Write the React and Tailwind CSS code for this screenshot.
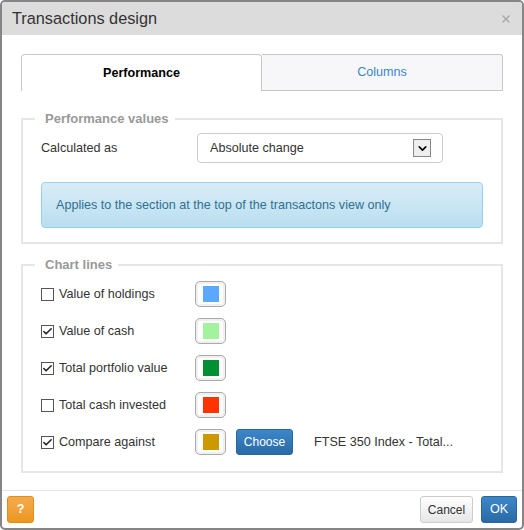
import { X, Check, ChevronDown } from 'lucide-react';

const rows = [
  { label: 'Value of holdings', checked: false, color: '#5ba8ff' },
  { label: 'Value of cash', checked: true, color: '#a3f29f' },
  { label: 'Total portfolio value', checked: true, color: '#008f33' },
  { label: 'Total cash invested', checked: false, color: '#ff3300' },
  { label: 'Compare against', checked: true, color: '#cc9900', compare: true },
];

function Box({ checked }) {
  return (
    <span className="flex h-[13px] w-[13px] items-center justify-center border border-[#555] bg-white">
      {checked && <Check className="h-[11px] w-[11px] text-[#222]" strokeWidth={3.5} />}
    </span>
  );
}

function Swatch({ color }) {
  return (
    <span className="flex h-[26px] w-[31px] items-center justify-center rounded-[5px] border border-[#aaa] bg-white shadow-[inset_0_0_0_2px_#f0f0f0]">
      <span className="h-[16px] w-[16px]" style={{ backgroundColor: color }} />
    </span>
  );
}

export default function App() {
  return (
    <div className="h-[530px] w-[524px] bg-white font-['Liberation_Sans',Arial,sans-serif] text-[12.6px] text-[#333]">
      <div className="flex h-full flex-col overflow-hidden rounded-[5px] border-2 border-[#858585] bg-white">
        <div className="flex h-[33px] items-center justify-between bg-[#dcdcdc] pl-[10px] pr-[10px]">
          <span className="text-[16.3px] text-[#333]">Transactions design</span>
          <X className="h-[12px] w-[12px] text-[#aaa]" strokeWidth={3} />
        </div>

        <div className="flex-1 px-[19px] pt-[19px]">
          <div className="flex h-[37px]">
            <div className="flex w-[241px] items-center justify-center rounded-t-[4px] border border-b-0 border-[#c8c8c8] bg-white font-bold text-black">
              Performance
            </div>
            <div className="flex flex-1 items-center justify-center rounded-tr-[3px] border border-l-0 border-[#c8c8c8] bg-[#f7f7f9] text-[#3a87c8]">
              Columns
            </div>
          </div>

          <fieldset className="mt-[18px] border-2 border-[#e6e6e6] px-[18px] pb-[14px]">
            <legend className="ml-[-6px] pl-[10px] pr-[6px] text-[13px] leading-[20px] font-bold text-[#999]">Performance values</legend>
            <div className="mt-[4px] flex h-[30px] items-center">
              <span className="w-[156px]">Calculated as</span>
              <div className="flex h-[30px] w-[246px] items-center justify-between rounded-[4px] border border-[#ccc] pl-[12px] pr-[11px]">
                <span className="text-[#333]">Absolute change</span>
                <span className="flex h-[18px] w-[18px] items-center justify-center border border-[#888] bg-[#eee]">
                  <ChevronDown className="h-[13px] w-[13px] text-black" strokeWidth={3} />
                </span>
              </div>
            </div>
            <div className="mt-[19px] flex h-[46px] items-center rounded-[4px] border border-[#9acfea] bg-gradient-to-b from-[#d9edf7] to-[#b9def0] pl-[14px] text-[#31708f]">
              Applies to the section at the top of the transactons view only
            </div>
          </fieldset>

          <fieldset className="mt-[11px] border-2 border-[#e6e6e6] px-[18px] pb-[16px]">
            <legend className="ml-[-6px] pl-[10px] pr-[6px] text-[13px] leading-[20px] font-bold text-[#999]">Chart lines</legend>
            <div className="flex flex-col gap-[11px] pt-[6px]">
              {rows.map((r) => (
                <div key={r.label} className="flex h-[26px] items-center">
                  <Box checked={r.checked} />
                  <span className="ml-[5px] w-[136px]">{r.label}</span>
                  <Swatch color={r.color} />
                  {r.compare && (
                    <>
                      <span className="ml-[10px] flex h-[26px] w-[57px] items-center justify-center rounded-[3px] border border-[#2b669a] bg-gradient-to-b from-[#3c87c8] to-[#2a6aa6] text-[12px] text-white">
                        Choose
                      </span>
                      <span className="ml-[21px]">FTSE 350 Index - Total...</span>
                    </>
                  )}
                </div>
              ))}
            </div>
          </fieldset>
        </div>

        <div className="mt-auto flex h-[38px] items-center justify-between border-t border-[#e5e5e5] pl-[5px] pr-[5px]">
          <span className="flex h-[27px] w-[27px] items-center justify-center rounded-[3px] border border-[#e38d13] bg-gradient-to-b from-[#f5ab4c] to-[#ec971f] font-bold text-white">
            ?
          </span>
          <div className="flex gap-[8px]">
            <span className="flex h-[27px] w-[53px] items-center justify-center rounded-[3px] border border-[#ccc] bg-gradient-to-b from-white to-[#e6e6e6] text-[12px] text-[#333]">
              Cancel
            </span>
            <span className="flex h-[27px] w-[36px] items-center justify-center rounded-[3px] border border-[#2b669a] bg-gradient-to-b from-[#3c87c8] to-[#2a6aa6] text-white">
              OK
            </span>
          </div>
        </div>
      </div>
    </div>
  );
}
